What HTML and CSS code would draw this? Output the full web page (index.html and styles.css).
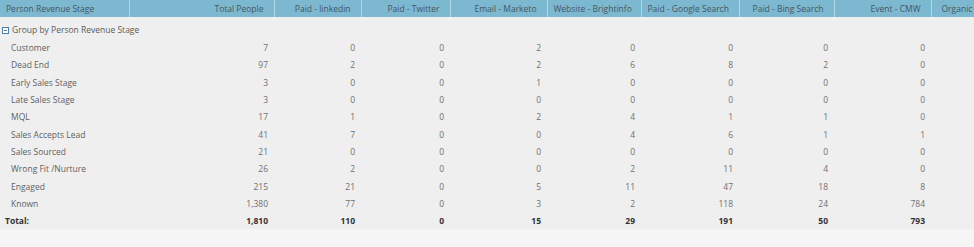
FILE: index.html
```html
<!DOCTYPE html>
<html>
<head>
<meta charset="utf-8">
<link rel="stylesheet" href="styles.css">
</head>
<body>
<div class="grid">
<table class="report">
  <colgroup>
    <col class="c-name"><col class="c-total"><col class="c-li"><col class="c-tw"><col class="c-em"><col class="c-web"><col class="c-goog"><col class="c-bing"><col class="c-cmw"><col class="c-org">
  </colgroup>
  <thead>
    <tr>
      <th class="left">Person Revenue Stage</th>
      <th>Total People</th>
      <th>Paid - linkedin</th>
      <th>Paid - Twitter</th>
      <th>Email - Marketo</th>
      <th>Website - Brightinfo</th>
      <th>Paid - Google Search</th>
      <th>Paid - Bing Search</th>
      <th>Event - CMW</th>
      <th class="left">Organic</th>
    </tr>
  </thead>
  <tbody>
    <tr class="spacer"><td colspan="10"></td></tr>
    <tr class="group">
      <td colspan="10"><svg class="tog" width="7" height="7" viewBox="0 0 7 7"><rect x="0.5" y="0.5" width="6" height="6" fill="#fff" stroke="#4a7fa8"/><rect x="2" y="3" width="3" height="1" fill="#4a7fa8"/></svg>Group by Person Revenue Stage</td>
    </tr>
    <tr><td class="name">Customer</td><td>7</td><td>0</td><td>0</td><td>2</td><td>0</td><td>0</td><td>0</td><td>0</td><td></td></tr>
    <tr><td class="name">Dead End</td><td>97</td><td>2</td><td>0</td><td>2</td><td>6</td><td>8</td><td>2</td><td>0</td><td></td></tr>
    <tr><td class="name">Early Sales Stage</td><td>3</td><td>0</td><td>0</td><td>1</td><td>0</td><td>0</td><td>0</td><td>0</td><td></td></tr>
    <tr><td class="name">Late Sales Stage</td><td>3</td><td>0</td><td>0</td><td>0</td><td>0</td><td>0</td><td>0</td><td>0</td><td></td></tr>
    <tr><td class="name">MQL</td><td>17</td><td>1</td><td>0</td><td>2</td><td>4</td><td>1</td><td>1</td><td>0</td><td></td></tr>
    <tr><td class="name">Sales Accepts Lead</td><td>41</td><td>7</td><td>0</td><td>0</td><td>4</td><td>6</td><td>1</td><td>1</td><td></td></tr>
    <tr><td class="name">Sales Sourced</td><td>21</td><td>0</td><td>0</td><td>0</td><td>0</td><td>0</td><td>0</td><td>0</td><td></td></tr>
    <tr><td class="name">Wrong Fit /Nurture</td><td>26</td><td>2</td><td>0</td><td>0</td><td>2</td><td>11</td><td>4</td><td>0</td><td></td></tr>
    <tr><td class="name">Engaged</td><td>215</td><td>21</td><td>0</td><td>5</td><td>11</td><td>47</td><td>18</td><td>8</td><td></td></tr>
    <tr><td class="name">Known</td><td>1,380</td><td>77</td><td>0</td><td>3</td><td>2</td><td>118</td><td>24</td><td>784</td><td></td></tr>
    <tr class="total"><td class="name">Total:</td><td>1,810</td><td>110</td><td>0</td><td>15</td><td>29</td><td>191</td><td>50</td><td>793</td><td></td></tr>
  </tbody>
</table>
</div>
</body>
</html>
```

FILE: styles.css
```css
html, body {
  margin: 0;
  padding: 0;
  background: #f5f5f5;
  overflow: hidden;
}
.grid {
  width: 974px;
  overflow: hidden;
}
.report {
  table-layout: fixed;
  border-collapse: collapse;
  width: 1020px;
  font-family: "Open Sans", "Liberation Sans", sans-serif;
  font-size: 8.5px;
  color: #707070;
  background: #efefef;
}
.c-name { width: 129px; }
.c-total { width: 145px; }
.c-li { width: 87px; }
.c-tw { width: 89px; }
.c-em { width: 97px; }
.c-web { width: 94px; }
.c-goog { width: 98px; }
.c-bing { width: 95px; }
.c-cmw { width: 97px; }
.c-org { width: 89px; }
.report th {
  height: 17px;
  padding: 0 10px 0 6px;
  background: #7db8d1;
  color: #45575f;
  font-weight: normal;
  text-align: right;
  white-space: nowrap;
  overflow: hidden;
  border-left: 1px solid #b4d6e5;
  box-sizing: border-box;
}
.report th:first-child { border-left: none; }
.report th.left { text-align: left; padding-left: 6px; }
.report th:last-child { padding-left: 10px; }
.report tbody tr td {
  text-align: right;
  padding: 0 6px 0 0;
  height: 17.3px;
  box-sizing: border-box;
}
.report tbody tr.spacer td { height: 2px; padding: 0; }
.report tbody tr.group td {
  height: 20px;
  text-align: left;
  padding-left: 2px;
  color: #5b5b5b;
  white-space: nowrap;
}
.tog { vertical-align: -1px; margin-right: 3px; }
.report td.name {
  text-align: left;
  padding-left: 11px;
  color: #5f5f5f;
  white-space: nowrap;
}
.total td {
  font-weight: bold;
  color: #333;
}
.report tr.total td.name { padding-left: 5px; color: #333; }
```
